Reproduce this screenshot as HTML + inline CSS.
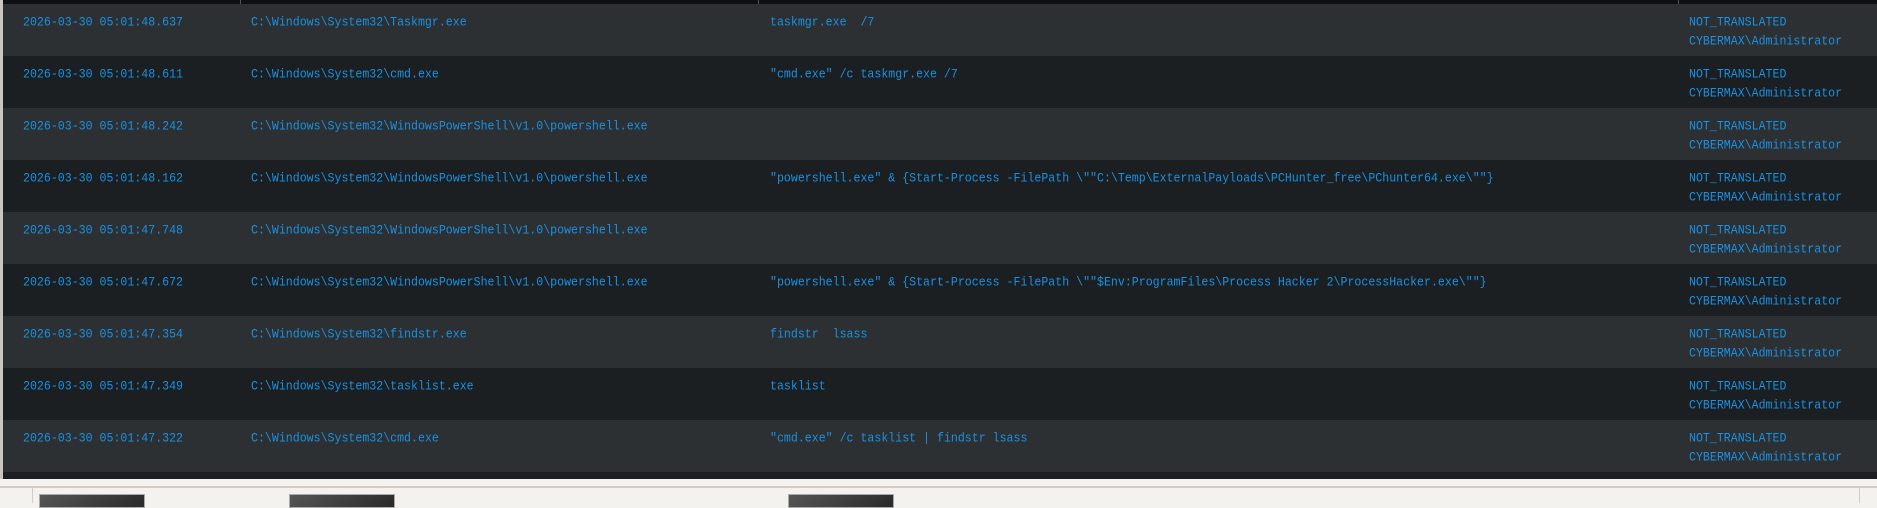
<!DOCTYPE html>
<html><head><style>
html,body{margin:0;padding:0;width:1877px;height:503px;overflow:hidden;background:#f3f2ef;}
.tbl{position:absolute;left:0;top:0;width:1877px;height:479px;background:#1b1f22;}
.lb{position:absolute;left:0;top:0;width:3px;height:479px;background:#c9c5bf;}
.top{position:absolute;left:3px;top:0;width:1874px;height:4px;background:#0d0f10;}
.sep{position:absolute;top:0;width:1px;height:4px;background:#555;}
.row{position:absolute;left:3px;width:1874px;height:52px;}
.o{background:#2c3033}.e{background:#1b1f22}
.t{position:absolute;font-family:"Liberation Mono","DejaVu Sans Mono",monospace;font-size:11.6px;color:#1a90e0;line-height:17px;white-space:pre;top:9px;transform:scaleY(1.13);transform-origin:0 0;}
.c1{left:20px}.c2{left:248px}.c3{left:767px}.c4{left:1686px}
.hl{position:absolute;left:0;top:486px;width:1877px;height:2px;background:#d2ccc5;}
.vl{position:absolute;left:32px;top:487px;width:1px;height:16px;background:#d2ccc5;}
.vl2{position:absolute;left:1859px;top:487px;width:1px;height:16px;background:#d2ccc5;}
.btn{position:absolute;top:494px;height:12px;width:104px;background:linear-gradient(135deg,#555,#2a2a2a);border:1px solid #aaa;}
</style></head><body>
<div class="tbl">
<div class="top"></div><div class="sep" style="left:240px"></div><div class="sep" style="left:758px"></div><div class="sep" style="left:1678px"></div>
<div class="row o" style="top:4px"><div class="t c1">2026-03-30 05:01:48.637</div><div class="t c2">C:\Windows\System32\Taskmgr.exe</div><div class="t c3">taskmgr.exe  /7</div><div class="t c4">NOT_TRANSLATED
CYBERMAX\Administrator</div></div>
<div class="row e" style="top:56px"><div class="t c1">2026-03-30 05:01:48.611</div><div class="t c2">C:\Windows\System32\cmd.exe</div><div class="t c3">"cmd.exe" /c taskmgr.exe /7</div><div class="t c4">NOT_TRANSLATED
CYBERMAX\Administrator</div></div>
<div class="row o" style="top:108px"><div class="t c1">2026-03-30 05:01:48.242</div><div class="t c2">C:\Windows\System32\WindowsPowerShell\v1.0\powershell.exe</div><div class="t c3"></div><div class="t c4">NOT_TRANSLATED
CYBERMAX\Administrator</div></div>
<div class="row e" style="top:160px"><div class="t c1">2026-03-30 05:01:48.162</div><div class="t c2">C:\Windows\System32\WindowsPowerShell\v1.0\powershell.exe</div><div class="t c3">"powershell.exe" &amp; {Start-Process -FilePath \""C:\Temp\ExternalPayloads\PCHunter_free\PChunter64.exe\""}</div><div class="t c4">NOT_TRANSLATED
CYBERMAX\Administrator</div></div>
<div class="row o" style="top:212px"><div class="t c1">2026-03-30 05:01:47.748</div><div class="t c2">C:\Windows\System32\WindowsPowerShell\v1.0\powershell.exe</div><div class="t c3"></div><div class="t c4">NOT_TRANSLATED
CYBERMAX\Administrator</div></div>
<div class="row e" style="top:264px"><div class="t c1">2026-03-30 05:01:47.672</div><div class="t c2">C:\Windows\System32\WindowsPowerShell\v1.0\powershell.exe</div><div class="t c3">"powershell.exe" &amp; {Start-Process -FilePath \""$Env:ProgramFiles\Process Hacker 2\ProcessHacker.exe\""}</div><div class="t c4">NOT_TRANSLATED
CYBERMAX\Administrator</div></div>
<div class="row o" style="top:316px"><div class="t c1">2026-03-30 05:01:47.354</div><div class="t c2">C:\Windows\System32\findstr.exe</div><div class="t c3">findstr  lsass</div><div class="t c4">NOT_TRANSLATED
CYBERMAX\Administrator</div></div>
<div class="row e" style="top:368px"><div class="t c1">2026-03-30 05:01:47.349</div><div class="t c2">C:\Windows\System32\tasklist.exe</div><div class="t c3">tasklist</div><div class="t c4">NOT_TRANSLATED
CYBERMAX\Administrator</div></div>
<div class="row o" style="top:420px"><div class="t c1">2026-03-30 05:01:47.322</div><div class="t c2">C:\Windows\System32\cmd.exe</div><div class="t c3">"cmd.exe" /c tasklist | findstr lsass</div><div class="t c4">NOT_TRANSLATED
CYBERMAX\Administrator</div></div>
<div class="lb"></div>
</div>
<div class="hl"></div><div class="vl"></div><div class="vl2"></div>
<div class="btn" style="left:39px"></div>
<div class="btn" style="left:289px"></div>
<div class="btn" style="left:788px"></div>
</body></html>
